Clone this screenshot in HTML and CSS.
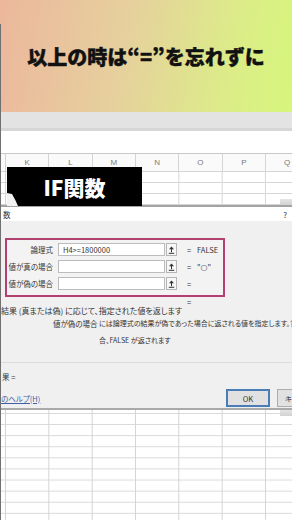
FILE: index.html
```html
<!DOCTYPE html>
<html lang="ja">
<head>
  <meta charset="UTF-8" />
  <meta name="viewport" content="width=device-width, initial-scale=1.0"/>
  <title>IF関数</title>
  <link rel="stylesheet" href="styles.css">
</head>
<body>
  <div class="page">
    <header class="banner">
      <h1>以上の時は“=”を忘れずに</h1>
    </header>

    <div class="ribbon"></div>
    <div class="formula-bar"></div>

    <div class="sheet-top">
      <div class="col-heads">
        <span class="corner"></span>
        <span>K</span><span>L</span><span>M</span><span>N</span><span>O</span><span>P</span><span>Q</span>
      </div>
      <div class="rows"></div>

      <div class="tag">
        IF関数
        <svg class="tag-curl" width="12" height="13" viewBox="0 0 12 13">
          <path d="M0 0 L5 1 Q8 6 11 13 L0 13 Z" fill="#f2f2f2"/>
        </svg>
      </div>
    </div>

    <!-- function arguments dialog -->
    <div class="dialog">
      <div class="dialog-title">
        <span>数</span>
        <span>?</span>
      </div>

      <div class="dialog-body">
        <div class="args">
          <div class="arg">
            <span class="arg-label">論理式</span>
            <span class="arg-input">H4&gt;=1800000</span>
            <span class="arg-ref">
              <svg width="7" height="8" viewBox="0 0 7 8"><path d="M3.5 0.5 L6 3.2 L1 3.2 Z" fill="#333"/><path d="M3.5 3 V6.2 M0.8 7.3 H6.2" stroke="#333" stroke-width="1"/></svg>
            </span>
            <span class="arg-eq">=</span>
            <span class="arg-value">FALSE</span>
          </div>
          <div class="arg">
            <span class="arg-label">値が真の場合</span>
            <span class="arg-input"></span>
            <span class="arg-ref">
              <svg width="7" height="8" viewBox="0 0 7 8"><path d="M3.5 0.5 L6 3.2 L1 3.2 Z" fill="#333"/><path d="M3.5 3 V6.2 M0.8 7.3 H6.2" stroke="#333" stroke-width="1"/></svg>
            </span>
            <span class="arg-eq">=</span>
            <span class="arg-value">"<span class="circle">○</span>"</span>
          </div>
          <div class="arg">
            <span class="arg-label">値が偽の場合</span>
            <span class="arg-input"></span>
            <span class="arg-ref">
              <svg width="7" height="8" viewBox="0 0 7 8"><path d="M3.5 0.5 L6 3.2 L1 3.2 Z" fill="#333"/><path d="M3.5 3 V6.2 M0.8 7.3 H6.2" stroke="#333" stroke-width="1"/></svg>
            </span>
            <span class="arg-eq">=</span>
            <span class="arg-value"></span>
          </div>
        </div>

        <div class="result-eq">=</div>
        <div class="summary">結果 (真または偽) に応じて、指定された値を返します</div>

        <div class="arg-help">
          <span class="arg-help-name">値が偽の場合</span>
          <span class="arg-help-text">には論理式の結果が偽であった場合に返される値を指定します。省略<br>合、FALSE が返されます</span>
        </div>

        <div class="divider"></div>

        <div class="formula-result">果 =</div>

        <div class="dialog-foot">
          <a href="#" class="help-link">のヘルプ(H)</a>
          <span class="btn btn-ok">OK</span>
          <span class="btn btn-cancel">キ</span>
        </div>
      </div>
    </div>

    <div class="sheet-bottom"></div>
  </div>
</body>
</html>
```

FILE: styles.css
```css
* {
  margin: 0;
  padding: 0;
  box-sizing: border-box;
}

body {
  width: 292px;
  height: 520px;
  overflow: hidden;
  background: #fff;
  font-family: "Noto Sans CJK JP", "Noto Sans", sans-serif;
}

.page {
  position: relative;
  width: 292px;
  height: 520px;
  overflow: hidden;
}

/* dark window edge on the left */
.page::before {
  content: '';
  position: absolute;
  left: 0;
  top: 24px;
  bottom: 0;
  width: 1px;
  background: #707070;
  z-index: 5;
}

.banner {
  height: 112px;
  background: linear-gradient(100deg, #ecb79d 0%, #e6d09d 42%, #dcec88 78%, #d6f67c 100%);
  display: flex;
  align-items: center;
  justify-content: center;
}

.banner h1 {
  font-size: 20px;
  font-weight: 900;
  color: #111;
  line-height: 1;
  margin-top: 2px;
  -webkit-text-stroke: 0.4px #111;
}

.ribbon {
  height: 19px;
  background: #e3e3e3;
  border-bottom: 3px solid #d6d6d6;
}

.formula-bar {
  height: 23px;
  background: #fff;
  border-bottom: 1px solid #c9c9c9;
}

/* sheet above the dialog */
.sheet-top {
  position: relative;
  height: 51px;
}

.col-heads {
  display: grid;
  grid-template-columns: 5px repeat(7, 43.333px);
  height: 18px;
  border-bottom: 1px solid #d4d4d4;
  background: #fafafa;
}

.col-heads span {
  border-left: 1px solid #d4d4d4;
  font-family: "Liberation Sans", sans-serif;
  font-size: 8px;
  color: #7a7a7a;
  display: flex;
  align-items: center;
  justify-content: center;
}

.col-heads .corner {
  border-left: none;
}

.rows {
  height: 33px;
  background:
    linear-gradient(to right, #d6d6d6 1px, transparent 1px) 5px 0 / 43.333px 100%,
    linear-gradient(to bottom, transparent 10px, #d6d6d6 10px) 0 0 / 100% 11px;
}

.tag {
  position: absolute;
  left: 7px;
  top: 13px;
  width: 135px;
  height: 39px;
  background: #000;
  color: #fff;
  font-size: 21px;
  font-weight: 900;
  display: flex;
  align-items: center;
  justify-content: center;
  z-index: 3;
}

.tag-curl {
  position: absolute;
  left: 0;
  bottom: 0;
}

/* dialog */
.dialog {
  position: relative;
  border-top: 2px solid #a3a3a3;
  border-bottom: 2px solid #a9a9a9;
  color: #333;
  font-size: 7.5px;
  font-feature-settings: "palt";
}

.dialog::before,
.dialog::after {
  content: '';
  position: absolute;
  right: 0;
  width: 12px;
  height: 6px;
  background: linear-gradient(#e4e4e4, #d2d2d2);
}

.dialog::before {
  top: -8px;
}

.dialog::after {
  bottom: -8px;
}

.dialog-title {
  height: 14px;
  background: #fff;
  display: flex;
  justify-content: space-between;
  align-items: center;
  padding: 0 5px 0 3px;
}

.dialog-title span:last-child {
  font-size: 8px;
}

.dialog-body {
  height: 187px;
  background: #f0f0f0;
  padding-top: 17px;
  overflow: hidden;
}

.args {
  margin-left: 5px;
  width: 220px;
  height: 59px;
  border: 2px solid #b3416f;
  padding-top: 3px;
  display: flex;
  flex-direction: column;
  gap: 4px;
  background: #f3f3f3;
}

.arg {
  display: flex;
  align-items: center;
  height: 13px;
}

.arg-label {
  width: 46px;
  margin-right: 5px;
  text-align: right;
  white-space: nowrap;
}

.arg-input {
  width: 107px;
  height: 13px;
  background: #fff;
  border: 1px solid #bcbcbc;
  padding-left: 4px;
  line-height: 11px;
}

.arg-ref {
  width: 11px;
  height: 13px;
  margin-left: 1px;
  border: 1px solid #b5b5b5;
  background: #f7f7f7;
  display: flex;
  align-items: center;
  justify-content: center;
}

.arg-eq {
  width: 10px;
  margin-left: 10px;
}

.circle {
  font-family: "DejaVu Sans", sans-serif;
  font-size: 8px;
}

.result-eq {
  margin-left: 187px;
  height: 9px;
  line-height: 9px;
}

.summary {
  height: 9px;
  line-height: 9px;
  font-size: 8px;
  padding-left: 1px;
  white-space: nowrap;
}

.arg-help {
  display: flex;
  font-size: 7px;
  line-height: 17px;
  white-space: nowrap;
}

.arg-help-name {
  width: 46px;
  margin-left: 53px;
  flex: none;
  font-size: 7.5px;
}

.divider {
  margin-top: 13px;
  height: 1px;
  background: #dcdcdc;
}

.formula-result {
  margin-top: 9px;
  height: 10px;
  line-height: 10px;
  padding-left: 2px;
}

.dialog-foot {
  margin-top: 7px;
  height: 18px;
  display: flex;
  align-items: center;
}

.help-link {
  width: 224px;
  flex: none;
  padding-left: 1px;
  color: #3f5fa8;
  text-decoration: underline;
}

.btn {
  flex: none;
  height: 18px;
  border: 1px solid #adadad;
  background: #e1e1e1;
  display: flex;
  align-items: center;
  justify-content: center;
}

.btn-ok {
  width: 44px;
  margin-left: 2px;
  border: 2px solid #4a7db5;
}

.btn-cancel {
  width: 16px;
  margin-left: 7px;
  justify-content: flex-end;
  padding-right: 1px;
  border-right: none;
}

/* sheet below the dialog */
.sheet-bottom {
  height: 110px;
  background:
    linear-gradient(to right, #d4d4d4 1px, transparent 1px) 5px 0 / 43.333px 100%,
    linear-gradient(to bottom, #d8d8d8 1px, transparent 1px) 0 3px / 100% 11.1px;
}
```
